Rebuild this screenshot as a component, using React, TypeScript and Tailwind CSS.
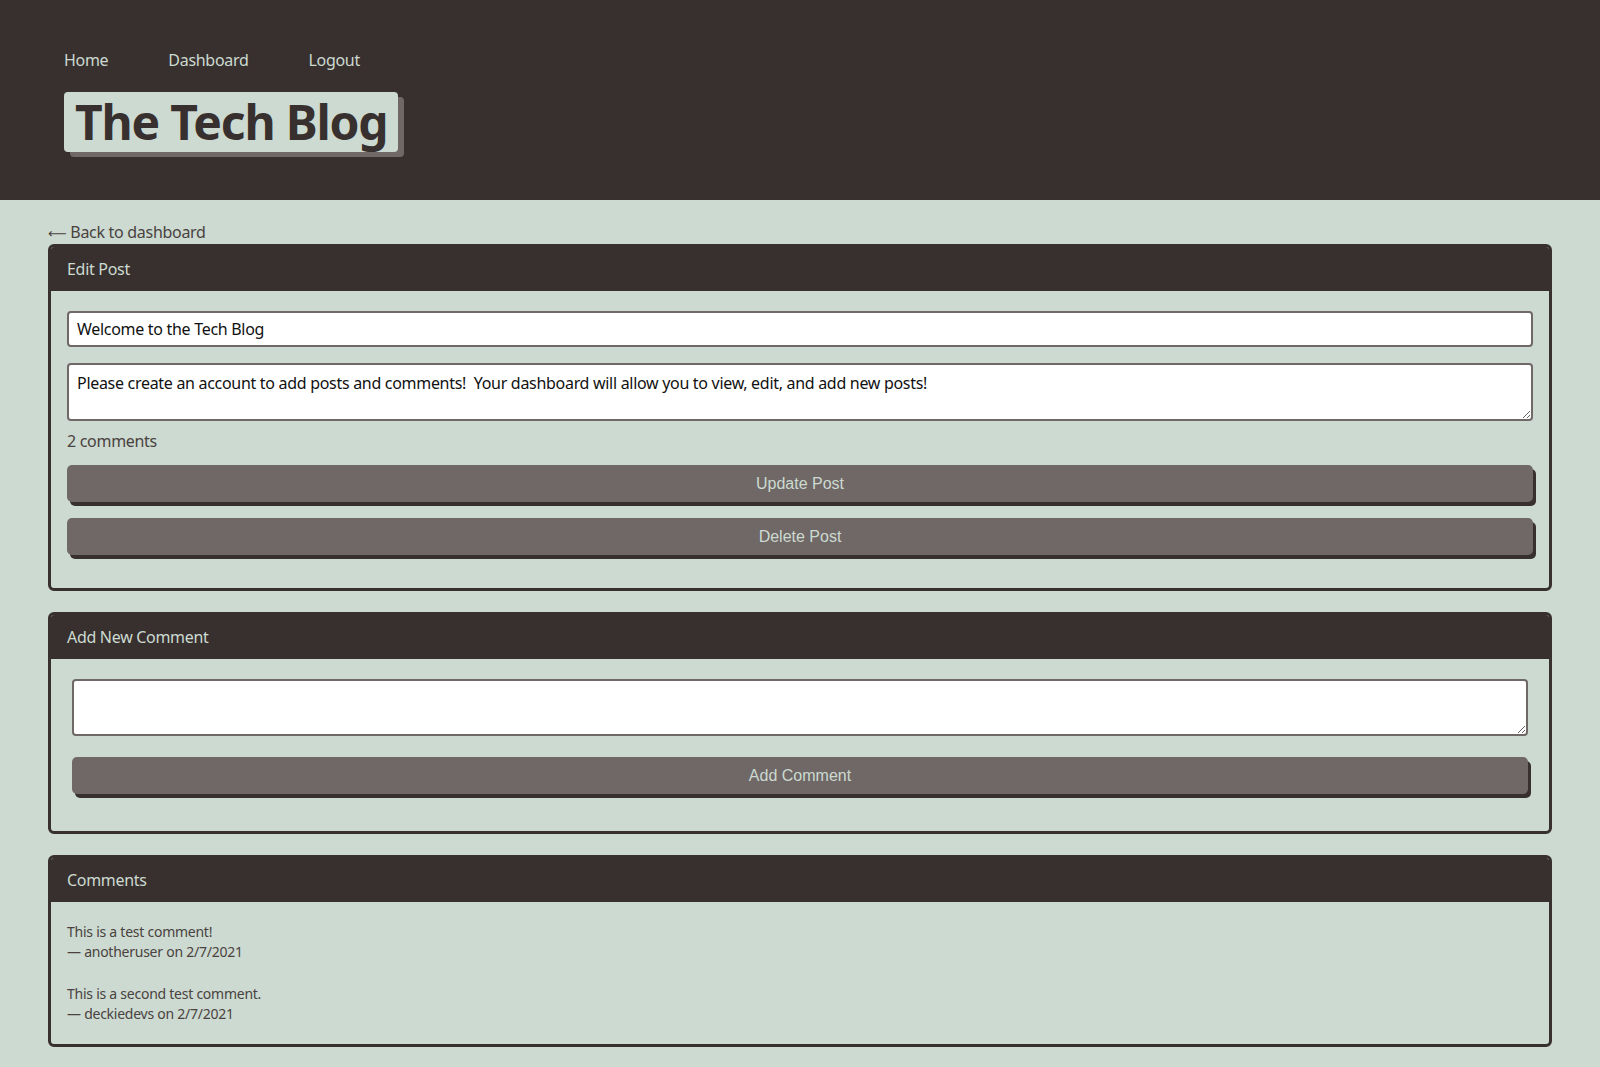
import React from 'react'

const comments = [
  { text: 'This is a test comment!', user: 'anotheruser', date: '2/7/2021' },
  { text: 'This is a second test comment.', user: 'deckiedevs', date: '2/7/2021' },
]

const Card = ({ title, children }: { title: string; children: React.ReactNode }) => (
  <section className="border-[3px] border-[#38302E] rounded-[6px] overflow-hidden">
    <div className="bg-[#38302E] h-[44px] flex items-center px-4 text-[16px] text-[#CCDAD1]">{title}</div>
    {children}
  </section>
)

const Button = ({ label }: { label: string }) => (
  <button
    className="w-full h-[37px] rounded-[5px] bg-[#6F6866] text-[#CCDAD1] text-[16px] tracking-normal shadow-[3px_4px_0_#38302E]"
    style={{ fontFamily: '"Liberation Sans", Arial, sans-serif' }}
  >
    {label}
  </button>
)

export default function App() {
  return (
    <div
      className="min-h-screen bg-[#CCDAD1] text-[#38302E] tracking-[-0.3px]"
      style={{ fontFamily: '"Noto Sans", sans-serif' }}
    >
      <header className="bg-[#38302E] h-[200px] px-16 pt-[48px]">
        <nav className="flex gap-[60px] text-[16px] leading-[24px] text-[#CCDAD1]">
          <a href="#">Home</a>
          <a href="#">Dashboard</a>
          <a href="#">Logout</a>
        </nav>
        <div className="mt-5 inline-flex">
          <h1 className="h-[60px] px-[11px] flex items-center bg-[#CCDAD1] rounded-[4px] shadow-[6px_5px_0_#6F6866] text-[48px] font-bold text-[#38302E] tracking-[-1.2px]">
            The Tech Blog
          </h1>
        </div>
      </header>

      <main className="px-12 pt-5 pb-6">
        <a href="#" className="flex items-center gap-1 h-[24px] text-[16px] leading-[24px] text-[#4a4240]">
          <span style={{ fontFamily: '"DejaVu Sans", sans-serif' }} className="text-[13px] leading-none mt-[2px]">⟵</span>
          <span>Back to dashboard</span>
        </a>

        <Card title="Edit Post">
          <div className="px-4 pt-[20px] pb-[33px]">
            <input
              defaultValue="Welcome to the Tech Blog"
              className="w-full h-[36px] px-2 bg-white border-2 border-[#6F6866] rounded-[4px] text-[16px] text-[#111] outline-none"
            />
            <textarea
              defaultValue="Please create an account to add posts and comments!  Your dashboard will allow you to view, edit, and add new posts!"
              className="block w-full h-[58px] mt-4 px-2 pt-[6px] bg-white border-2 border-[#6F6866] rounded-[4px] text-[16px] text-[#111] outline-none"
            />
            <p className="mt-2 text-[16px] leading-[24px] text-[#4a4240]">2 comments</p>
            <div className="mt-3 flex flex-col gap-4">
              <Button label="Update Post" />
              <Button label="Delete Post" />
            </div>
          </div>
        </Card>

        <div className="mt-[21px]">
          <Card title="Add New Comment">
            <div className="px-[21px] pt-[20px] pb-[37px]">
              <textarea className="block w-full h-[57px] px-2 bg-white border-2 border-[#6F6866] rounded-[4px] outline-none" />
              <div className="mt-[21px]">
                <Button label="Add Comment" />
              </div>
            </div>
          </Card>
        </div>

        <div className="mt-[21px]">
          <Card title="Comments">
            <div className="px-4 pt-[20px] pb-[20px] flex flex-col gap-[22px] text-[14px] leading-[20px] tracking-[-0.25px] text-[#4a4240]">
              {comments.map((c) => (
                <div key={c.user}>
                  <p>{c.text}</p>
                  <p>— {c.user} on {c.date}</p>
                </div>
              ))}
            </div>
          </Card>
        </div>
      </main>
    </div>
  )
}
